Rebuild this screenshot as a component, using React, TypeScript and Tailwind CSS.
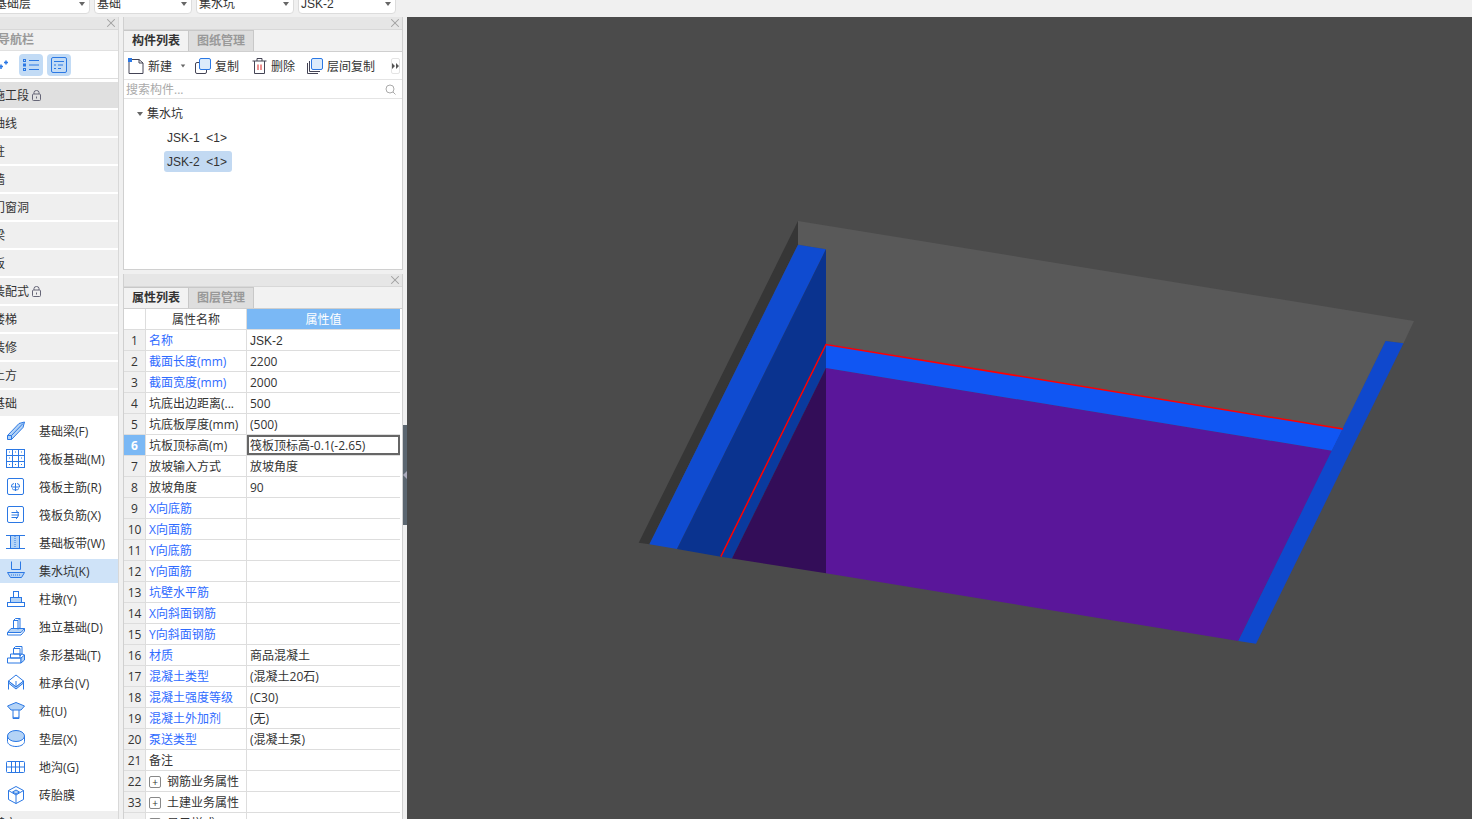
import type { ReactNode } from 'react';
import { X } from 'lucide-react';

const groupsTop = ['施工段', '轴线', '柱', '墙', '门窗洞', '梁', '板', '装配式', '楼梯', '装修', '土方', '基础'];

const blue = '#2b78e4';
const tint = '#b4d3f6';

const navIcons: Record<string, ReactNode> = {
  beam: (
    <>
      <path d="M1.5 14.5 13 2.5 18.5 1 17 6.5 5.5 18.5H1.5Z" fill={tint} />
      <path d="M1.5 14.5H5.5V18.5M5.5 14.5 17 2.5" />
    </>
  ),
  raft: (
    <>
      <rect x="0.5" y="0.5" width="18" height="18" />
      <path d="M0.5 6.500H18.500M0.500 12.500H18.500M6.500 0.500V18.500M12.500 0.500V18.500" />
      <path d="M3 3h1M9 3h1M15 3h1M3 9h1M15 9h1M3 15.500h1M9 15.500h1M15 15.500h1" />
    </>
  ),
  main: (
    <>
      <rect x="1.500" y="1.500" width="16" height="16" rx="1.500" />
      <path d="M9.500 6V14M5.500 10H13.500M8 6.500a3 3 0 0 0-2.500 3.500M11 6.500a3 3 0 0 1 2.500 3.500M6 11.500a4 3 0 0 0 7 0" />
    </>
  ),
  neg: (
    <>
      <rect x="1.500" y="1.500" width="16" height="16" rx="1.500" />
      <path d="M5.500 7.500H13M5.500 10H13M5.500 12.500H12M10 5.500C13 7 13 12 10 14" />
    </>
  ),
  band: (
    <>
      <rect x="4" y="3" width="10" height="12" fill={tint} stroke="none" />
      <path d="M0 2.500H19M0 15.500H19M4.500 3V15M13.500 3V15" />
      <path d="M9 3V15" strokeDasharray="1 1" />
    </>
  ),
  pit: (
    <>
      <path d="M5.500 0.500V8.500H14.500V0.500" />
      <path d="M1.500 11.500H18.500L15.500 16.500H4.500Z" fill={tint} />
      <path d="M5 14H15" strokeDasharray="1 1" />
    </>
  ),
  pier: (
    <>
      <rect x="7.500" y="2.500" width="5" height="6" />
      <rect x="4.500" y="8.500" width="11" height="5" fill={tint} />
      <rect x="1.500" y="13.500" width="17" height="4" />
    </>
  ),
  iso: (
    <>
      <path d="M7.500 3.500 9.500 1.500H14V11L11.500 12.500H7.500Z" />
      <path d="M1.500 15.500 5 11.500H18.500L15 15.500Z" fill={tint} />
      <path d="M1.500 15.500V18H15L18.500 14V11.500M7.500 3.500H12V12.500M12 3.500 14 1.500" />
    </>
  ),
  strip: (
    <>
      <path d="M7.500 3.500 9.500 1.500H16V9L14 11V3.500H7.500V9M7.500 9H14" />
      <path d="M4.500 9H14V13H4.500ZM1.500 13H15V18H1.500Z" />
      <path d="M15 13 18.500 10V15L15 18ZM14 9 16 9 18.500 10" fill={tint} />
    </>
  ),
  cap: (
    <>
      <path d="M10 2 17.500 8 10 14 2.500 8Z" />
      <path d="M2.500 8V16.500M17.500 8V16.500M10 14V8" />
      <path d="M2.500 8 10 14 17.500 8 17.500 10 10 16 2.500 10Z" fill={tint} />
    </>
  ),
  pile: (
    <>
      <path d="M1.500 5 10 1.500 18.500 5 15 9H5Z" fill={tint} />
      <path d="M7 9V17.500H13V9M7 16c1 1 5 1 6 0" />
    </>
  ),
  cushion: (
    <>
      <path d="M1.500 7V12.500C1.500 15 5 17.500 10 17.500S18.500 15 18.500 12.500V7" />
      <ellipse cx="10" cy="7" rx="8.500" ry="5.500" fill={tint} />
    </>
  ),
  trench: (
    <>
      <rect x="0.500" y="4.500" width="18" height="11" rx="1" />
      <path d="M0.500 10H18.500M5.500 4.500V15.500M9.500 4.500V15.500M13.500 4.500V15.500" />
    </>
  ),
  brick: (
    <>
      <path d="M10 1.500 17.500 5.500V14.500L10 18.500 2.500 14.500V5.500Z" />
      <path d="M2.500 5.500 10 10 17.500 5.500M10 10V18.500" />
      <path d="M10 5 13.500 7 10 9 6.500 7Z" fill={tint} />
    </>
  ),
};

const subItems = [
  { icon: 'beam', label: '基础梁(F)' },
  { icon: 'raft', label: '筏板基础(M)' },
  { icon: 'main', label: '筏板主筋(R)' },
  { icon: 'neg', label: '筏板负筋(X)' },
  { icon: 'band', label: '基础板带(W)' },
  { icon: 'pit', label: '集水坑(K)', active: true },
  { icon: 'pier', label: '柱墩(Y)' },
  { icon: 'iso', label: '独立基础(D)' },
  { icon: 'strip', label: '条形基础(T)' },
  { icon: 'cap', label: '桩承台(V)' },
  { icon: 'pile', label: '桩(U)' },
  { icon: 'cushion', label: '垫层(X)' },
  { icon: 'trench', label: '地沟(G)' },
  { icon: 'brick', label: '砖胎膜' },
];

type Row = { n: number; name: string; value?: string; link?: boolean; expand?: boolean; active?: boolean };

const rows: Row[] = [
  { n: 1, name: '名称', value: 'JSK-2', link: true },
  { n: 2, name: '截面长度(mm)', value: '2200', link: true },
  { n: 3, name: '截面宽度(mm)', value: '2000', link: true },
  { n: 4, name: '坑底出边距离(...', value: '500' },
  { n: 5, name: '坑底板厚度(mm)', value: '(500)' },
  { n: 6, name: '坑板顶标高(m)', value: '筏板顶标高-0.1(-2.65)', active: true },
  { n: 7, name: '放坡输入方式', value: '放坡角度' },
  { n: 8, name: '放坡角度', value: '90' },
  { n: 9, name: 'X向底筋', link: true },
  { n: 10, name: 'X向面筋', link: true },
  { n: 11, name: 'Y向底筋', link: true },
  { n: 12, name: 'Y向面筋', link: true },
  { n: 13, name: '坑壁水平筋', link: true },
  { n: 14, name: 'X向斜面钢筋', link: true },
  { n: 15, name: 'Y向斜面钢筋', link: true },
  { n: 16, name: '材质', value: '商品混凝土', link: true },
  { n: 17, name: '混凝土类型', value: '(混凝土20石)', link: true },
  { n: 18, name: '混凝土强度等级', value: '(C30)', link: true },
  { n: 19, name: '混凝土外加剂', value: '(无)', link: true },
  { n: 20, name: '泵送类型', value: '(混凝土泵)', link: true },
  { n: 21, name: '备注' },
  { n: 22, name: '钢筋业务属性', expand: true },
  { n: 33, name: '土建业务属性', expand: true },
  { n: 41, name: '显示样式', expand: true },
];

function Caret({ className = '' }: { className?: string }) {
  return <span className={`h-0 w-0 border-x-[3px] border-t-[4px] border-x-transparent border-t-[#666] ${className}`} />;
}

function LevelSelect({ label, width, latin }: { label: string; width: string; latin?: boolean }) {
  return (
    <div className={`flex h-[25px] items-center justify-between rounded-b-[4px] border border-[#dcdcdc] bg-white pl-[2px] pr-[4px] pt-[4px] ${width}`}>
      <span className={latin ? "font-['Liberation_Sans']" : ''}>{label}</span>
      <Caret />
    </div>
  );
}

function PanelHeader() {
  return (
    <div className="flex h-[13px] shrink-0 items-center justify-end border-b border-[#d8d8d8] bg-[#e6e6e6]">
      <X size={14} strokeWidth={1.8} color="#a0a0a0" />
    </div>
  );
}

function PanelTabs({ active, other }: { active: string; other: string }) {
  return (
    <div className="flex h-[22px] shrink-0 border-b border-[#cfcfcf] bg-[#f2f2f2]">
      <div className="flex w-[65px] items-center justify-center border-r border-t border-[#c8c8c8] font-bold text-[#333]">{active}</div>
      <div className="flex w-[65px] items-center justify-center border-r border-t border-[#c8c8c8] bg-[#dedede] font-bold text-[#999]">{other}</div>
    </div>
  );
}

function ToolButton({ icon, label, width, children }: { icon: ReactNode; label: string; width: string; children?: ReactNode }) {
  return (
    <div className={`flex items-center gap-[4px] ${width}`}>
      {icon}
      <span className="pt-[2px]">{label}</span>
      {children}
    </div>
  );
}

function Scene() {
  return (
    <svg className="h-full w-full" viewBox="407 17 1065 802">
      <polygon points="798,221 1414,321 1403.500,343.300 1385.600,341 1343,429 826,344 826,249.300 798,244.700" fill="#595959" />
      <polygon points="798,221 798,244.700 649.400,544.300 638.700,542.700" fill="#363636" />
      <polygon points="798,244.700 826,249.300 677,549 649.400,544.300" fill="#0f4bd0" />
      <polygon points="826,249.300 826,344 720.800,556.700 677,549" fill="#0a338f" />
      <polygon points="826,344 826,368 732,558.500 720.800,556.700" fill="#0a3a9e" />
      <polygon points="826,368 826,573.300 732,558.500" fill="#330d58" />
      <polygon points="826,368 1332,450.700 1238.200,641 826,573.300" fill="#5a169a" />
      <polygon points="826,344 1343,429 1332,450.700 826,368" fill="#1056f3" />
      <polygon points="1385.600,341 1403.500,343.300 1256,643.700 1238.200,641" fill="#0f48cd" />
      <path d="M720.800 556.700 826 344.500 1343 429" fill="none" stroke="#ff0000" strokeWidth="1.500" />
    </svg>
  );
}

export default function App() {
  return (
    <div className="flex h-[819px] w-[1472px] flex-col overflow-hidden bg-[#f0f0f0] font-['Open_Sans','Noto_Sans_CJK_SC',sans-serif] text-[12px] leading-[16px] text-[#333]">
      <div className="flex h-[17px] shrink-0 items-end gap-[4px] pb-[3px]">
        <div className="-ml-[8px]">
          <LevelSelect label="基础层" width="w-[98px]" />
        </div>
        <LevelSelect label="基础" width="w-[98px]" />
        <LevelSelect label="集水坑" width="w-[98px]" />
        <LevelSelect label="JSK-2" width="w-[98px]" latin />
      </div>

      <div className="flex min-h-0 flex-1">
        <aside className="flex w-[119px] shrink-0 flex-col overflow-hidden border-r border-[#d8d8d8] bg-white">
          <PanelHeader />
          <div className="flex h-[21px] shrink-0 items-center border-b border-[#e0e0e0] bg-[#f0f0f0] font-bold text-[#999]">
            <span className="-ml-[2px]">导航栏</span>
          </div>
          <div className="flex h-[28px] shrink-0 items-center border-b border-[#ddd]">
            <svg className="w-[19px] shrink-0" height="12" viewBox="0 0 19 12" fill="none" stroke={blue} strokeWidth="1.500">
              <path d="M0 7.500H3M1 5.500V10M4 3.500H8M6 1.500V5.500" />
            </svg>
            <div className="flex h-[22px] w-[24px] items-center justify-center rounded-[4px] bg-[#c2dbf5]">
              <svg width="16" height="14" viewBox="0 0 16 14" fill="none" stroke={blue}>
                <path d="M6 2.500H16M6 7H16M6 11.500H16" />
                <rect x="0.500" y="1.500" width="2" height="2" />
                <rect x="0.500" y="6" width="2" height="2" />
                <rect x="0.500" y="10.500" width="2" height="2" />
              </svg>
            </div>
            <div className="ml-[4px] flex h-[22px] w-[24px] items-center justify-center rounded-[4px] bg-[#c2dbf5]">
              <svg width="16" height="16" viewBox="0 0 16 16" fill="none" stroke={blue}>
                <rect x="0.500" y="0.500" width="15" height="15" rx="1.500" />
                <path d="M3 4.500H13M3 8H5M7 8H12M3 11.500H5M7 11.500H10" />
              </svg>
            </div>
          </div>
          <div className="flex shrink-0 flex-col gap-[2px] pt-[3px]">
            {groupsTop.map((g, i) => (
              <div key={g} className={`flex h-[26px] items-center gap-[3px] pt-px ${i === 0 ? 'bg-[#e0e0e0]' : 'bg-[#efefef]'}`}>
                <span className="-ml-[7px] whitespace-nowrap">{g}</span>
                {(g === '施工段' || g === '装配式') && (
                  <svg width="9" height="11" viewBox="0 0 9 11" fill="none" stroke="#667">
                    <rect x="0.500" y="4" width="8" height="6.500" rx="1" />
                    <path d="M2 4V2.500a2.500 2 0 0 1 5 0V4M4.500 6.500v2" />
                  </svg>
                )}
              </div>
            ))}
          </div>
          <div className="mt-px flex shrink-0 flex-col">
            {subItems.map((s) => (
              <div key={s.label} className="h-[28px] shrink-0 py-[2px]">
                <div className={`flex h-full items-center gap-[13px] pl-[6px] ${s.active ? 'bg-[#cfe3f8]' : ''}`}>
                  <svg width="20" height="20" viewBox="0 0 20 20" fill="none" stroke={blue} strokeWidth="1">
                    {navIcons[s.icon]}
                  </svg>
                  <span className="pt-[2px]">{s.label}</span>
                </div>
              </div>
            ))}
          </div>
          <div className="mt-[2px] flex h-[26px] shrink-0 items-center bg-[#efefef]">
            <span className="-ml-[7px] whitespace-nowrap">其它</span>
          </div>
        </aside>

        <div className="w-[4px] shrink-0 bg-[#f0f0f0]" />

        <main className="flex w-[280px] shrink-0 flex-col gap-[4px]">
          <section className="flex h-[253px] shrink-0 flex-col border-x border-b border-[#d0d0d0] bg-white">
            <PanelHeader />
            <PanelTabs active="构件列表" other="图纸管理" />
            <div className="flex h-[28px] items-center border-b border-[#e4e4e4] pl-[4px]">
              <ToolButton
                width="w-[67px]"
                label="新建"
                icon={
                  <svg width="16" height="16" viewBox="0 0 16 16" fill="none" stroke="#445">
                    <path d="M3 1.500H11L15 5V15.500H1V4" />
                    <path d="M11 1.500V5H15" />
                    <rect x="0" y="0" width="4" height="4" fill={blue} stroke="none" />
                  </svg>
                }
              >
                <Caret className="ml-[4px] scale-75" />
              </ToolButton>
              <ToolButton
                width="w-[57px]"
                label="复制"
                icon={
                  <svg width="16" height="16" viewBox="0 0 16 16" fill="none" stroke="#445">
                    <rect x="0.500" y="4.500" width="11" height="11" rx="1.500" />
                    <rect x="4.500" y="0.500" width="11" height="11" rx="1.500" fill="#dcebfb" stroke={blue} />
                  </svg>
                }
              />
              <ToolButton
                width="w-[55px]"
                label="删除"
                icon={
                  <svg width="15" height="16" viewBox="0 0 15 16" fill="none" stroke="#445">
                    <path d="M0.500 3H14.500M5 3V0.500H10V3M2.500 3V15.500H12.500V3" />
                    <path d="M6 6.500V12M9 6.500V12" stroke="#d22" />
                  </svg>
                }
              />
              <ToolButton
                width="w-[84px]"
                label="层间复制"
                icon={
                  <svg width="16" height="16" viewBox="0 0 16 16" fill="none" stroke="#445">
                    <path d="M2.500 3V13.500H13M0.500 5V15.500H11" />
                    <rect x="4.500" y="0.500" width="11" height="11" rx="1.500" fill="#dcebfb" stroke={blue} />
                  </svg>
                }
              />
              <div className="flex h-[16px] w-[9px] items-center justify-center rounded-[2px] border border-[#e4e4e4]">
                <svg width="7" height="6" viewBox="0 0 7 6" fill="#555">
                  <path d="M0 0 3 3 0 6ZM4 0 7 3 4 6Z" />
                </svg>
              </div>
            </div>
            <div className="flex h-[19px] items-center justify-between border-b border-[#e4e4e4] pl-[2px] pr-[6px] pt-px text-[#aaa]">
              <span>搜索构件...</span>
              <svg width="11" height="11" viewBox="0 0 11 11" fill="none" stroke="#aaa">
                <circle cx="5" cy="5" r="4" />
                <path d="M8 8 10.500 10.500" />
              </svg>
            </div>
            <div className="flex flex-col pt-[3px]">
              <div className="flex h-[24px] items-center gap-[4px] pl-[13px]">
                <Caret />
                <span>集水坑</span>
              </div>
              <div className="flex h-[24px] items-center pl-[43px] font-['Liberation_Sans']">JSK-1&nbsp;&nbsp;&lt;1&gt;</div>
              <div className="ml-[40px] mt-px flex h-[21px] w-[68px] items-center rounded-[3px] bg-[#c2d9f2] pl-[3px] font-['Liberation_Sans']">JSK-2&nbsp;&nbsp;&lt;1&gt;</div>
            </div>
          </section>

          <section className="flex min-h-0 flex-1 flex-col overflow-hidden border-x border-[#d0d0d0] bg-white">
            <PanelHeader />
            <PanelTabs active="属性列表" other="图层管理" />
            <div className="mr-[2px] flex h-[21px] shrink-0 border-b border-[#ddd]">
              <div className="w-[22px] border-r border-[#ddd]" />
              <div className="flex w-[101px] items-center justify-center border-r border-[#ddd] pt-px">属性名称</div>
              <div className="flex flex-1 items-center justify-center bg-[#7ab8f5] pt-px text-white">属性值</div>
            </div>
            {rows.map((r) => (
              <div key={r.n} className="mr-[2px] flex h-[21px] shrink-0 border-b border-[#ddd]">
                <div className={`flex w-[22px] items-center justify-center border-r border-[#ddd] pt-px ${r.active ? 'bg-[#7ab8f5] font-bold text-white' : 'bg-[#f0f0f0]'}`}>
                  {r.n}
                </div>
                <div className={`flex w-[101px] items-center gap-[6px] whitespace-nowrap border-r border-[#ddd] pl-[3px] pt-px ${r.link ? 'text-[#2f6bff]' : ''}`}>
                  {r.expand && (
                    <span className="flex h-[12px] w-[12px] items-center justify-center rounded-[2px] border border-[#888] text-[10px] leading-none">+</span>
                  )}
                  {r.name}
                </div>
                <div
                  className={`flex flex-1 items-center whitespace-nowrap pt-px ${r.active ? 'border-2 border-[#666] pl-px' : 'pl-[3px]'} ${r.value === 'JSK-2' ? "font-['Liberation_Sans']" : ''}`}
                >
                  {r.value}
                </div>
              </div>
            ))}
          </section>
        </main>

        <div className="w-[4px] shrink-0 pt-[408px]">
          <div className="relative h-[100px] bg-[#5b6670]">
            <span className="absolute left-0 top-[46px] h-0 w-0 border-y-[4px] border-r-[4px] border-y-transparent border-r-[#aab]" />
          </div>
        </div>

        <div className="min-w-0 flex-1 bg-[#4b4b4b]">
          <Scene />
        </div>
      </div>
    </div>
  );
}
